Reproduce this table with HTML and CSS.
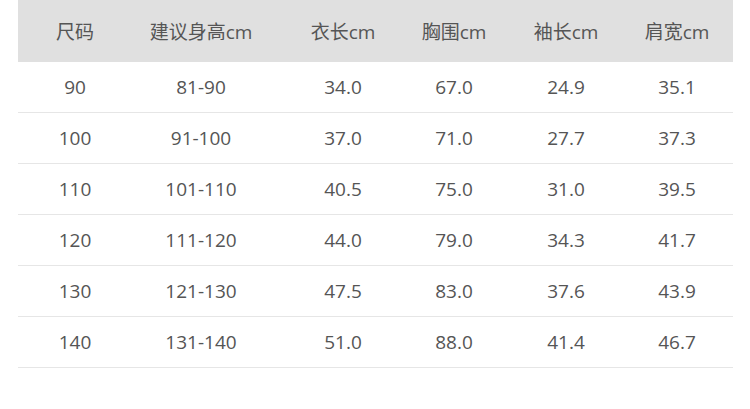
FILE: index.html
```html
<!DOCTYPE html>
<html lang="zh-CN">
<head>
<meta charset="utf-8">
<link rel="stylesheet" href="styles.css">
</head>
<body>
<div class="size-table">
  <div class="row head">
    <span>尺码</span><span>建议身高cm</span><span>衣长cm</span><span>胸围cm</span><span>袖长cm</span><span>肩宽cm</span>
  </div>
  <div class="row"><span>90</span><span>81-90</span><span>34.0</span><span>67.0</span><span>24.9</span><span>35.1</span></div>
  <div class="row"><span>100</span><span>91-100</span><span>37.0</span><span>71.0</span><span>27.7</span><span>37.3</span></div>
  <div class="row"><span>110</span><span>101-110</span><span>40.5</span><span>75.0</span><span>31.0</span><span>39.5</span></div>
  <div class="row"><span>120</span><span>111-120</span><span>44.0</span><span>79.0</span><span>34.3</span><span>41.7</span></div>
  <div class="row"><span>130</span><span>121-130</span><span>47.5</span><span>83.0</span><span>37.6</span><span>43.9</span></div>
  <div class="row"><span>140</span><span>131-140</span><span>51.0</span><span>88.0</span><span>41.4</span><span>46.7</span></div>
</div>
</body>
</html>
```
FILE: styles.css
```css
html, body {
  margin: 0;
  padding: 0;
  background: #ffffff;
}
body {
  font-family: "Open Sans", "Noto Sans CJK SC", sans-serif;
  font-size: 19px;
  color: #555555;
}
.size-table {
  margin-left: 18px;
  width: 715px;
}
.row {
  display: grid;
  grid-template-columns: 114px 138px 146px 76px 148px 74px 1fr;
  align-items: center;
  height: 50px;
  border-bottom: 1px solid #e6e6e6;
}
.row span {
  text-align: center;
  white-space: nowrap;
}
.row.head {
  height: 62px;
  background: #e0e0e0;
  border-bottom: none;
}
```
